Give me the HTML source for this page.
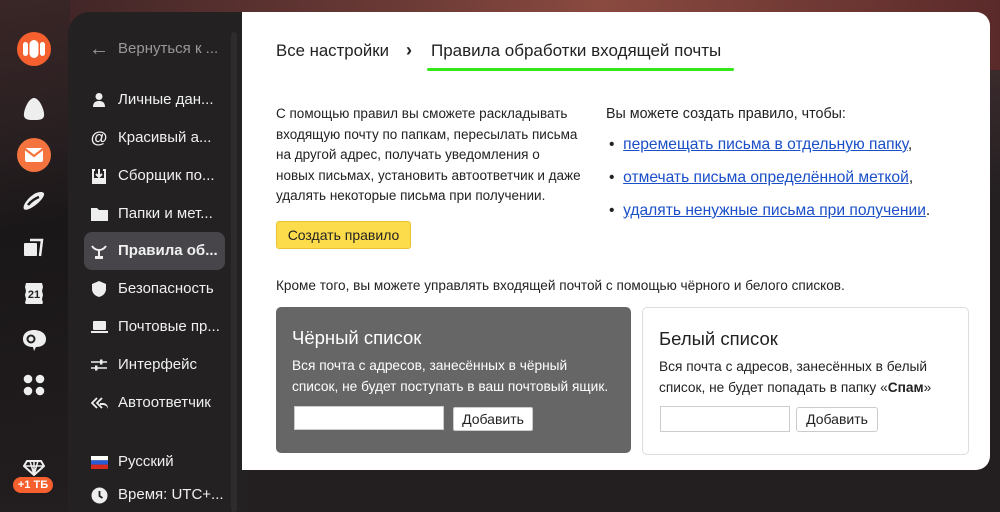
<!DOCTYPE html>
<html><head><meta charset="utf-8"><style>
*{margin:0;padding:0;box-sizing:border-box}
body{width:1000px;height:505px;overflow:hidden;position:relative;font-family:"Liberation Sans",sans-serif;background:#231f21}
.topbg{position:absolute;left:0;top:0;width:1000px;height:505px;background:linear-gradient(90deg,#3a2224 0%,#6b3a36 40%,#8a4a40 60%,#5a2a2a 100%)}
.botbg{position:absolute;left:0;top:70px;width:1000px;height:435px;background:linear-gradient(180deg,#3a2a2c 0%,#231f21 30%,#231f21 100%)}
.lbg{position:absolute;left:0;top:0;width:70px;height:505px;background:linear-gradient(170deg,#3a2626 0%,#2a2022 25%,#1a1718 45%,#221d1f 100%)}
.ic{position:absolute;left:17px;width:34px;height:34px}
.settings{position:absolute;left:68px;top:12px;width:180px;height:500px;background:#232122;border-radius:22px 0 0 0}
.scroll{position:absolute;left:231px;top:32px;width:6px;height:480px;background:#2e2c2d;border-radius:3px}
.item{position:absolute;left:90px;color:#f0f0f0;font-size:15px;height:20px;line-height:20px;display:flex;align-items:center}
.item .i{width:18px;height:18px;margin-right:10px;display:flex;align-items:center;justify-content:center}
.sel{position:absolute;left:84px;top:232px;width:141px;height:38px;background:#47454a;border-radius:8px}
.main{position:absolute;left:242px;top:12px;width:748px;height:458px;background:#fff;border-radius:0 14px 14px 0}
.t{position:absolute;color:#222;font-size:14px;line-height:20.5px}
a{color:#1a4fc8;text-decoration:underline}
</style></head><body>
<div class="topbg"></div>
<div class="botbg"></div>
<div class="lbg"></div>
<svg class="ic" style="top:32px" viewBox="0 0 34 34"><circle cx="17" cy="17" r="17" fill="#f5602e"/><rect x="6" y="10" width="5" height="14" rx="2.5" fill="#fff"/><rect x="12.5" y="8" width="9" height="18" rx="4.5" fill="#fff"/><rect x="23" y="10" width="5" height="14" rx="2.5" fill="#fff"/></svg>
<svg class="ic" style="top:92px" viewBox="0 0 34 34"><path d="M17 6C11 6 6 20 7 24c1 4 5 4 10 4s9 0 10-4C28 20 23 6 17 6z" fill="#eee"/></svg>
<svg class="ic" style="top:138px" viewBox="0 0 34 34"><circle cx="17" cy="17" r="17" fill="#f5733e"/><rect x="8" y="10" width="18" height="14" rx="2" fill="#fff"/><path d="M8 11l9 7 9-7" stroke="#f5733e" stroke-width="2.2" fill="none"/></svg>
<svg class="ic" style="top:183px" viewBox="0 0 34 34"><path d="M7 26c-2-3 4-12 12-16 5-2 9-1 8 2-1 4-8 11-15 14-3 1-4 1-5 0z" fill="#eee"/><path d="M11 22c3-4 8-7 11-8" stroke="#1d1a1b" stroke-width="2.4" fill="none"/></svg>
<svg class="ic" style="top:230px" viewBox="0 0 34 34"><rect x="7" y="13" width="13" height="13" rx="1" fill="#eee"/><path d="M13 10h12l-2 16" stroke="#eee" stroke-width="2.5" fill="none"/></svg>
<svg class="ic" style="top:276px" viewBox="0 0 34 34"><path d="M9 7h16l1 4-1 4 1 4-1 4 1 4-1 1H9l-1-1 1-4-1-4 1-4-1-4 1-4z" fill="#eee"/><text x="17" y="22" font-size="11" font-weight="bold" text-anchor="middle" fill="#222" font-family="Liberation Sans">21</text></svg>
<svg class="ic" style="top:322px" viewBox="0 0 34 34"><path d="M6 17c0-6 5-9 11-9s12 3 12 9-5 8-10 8l-2 4-1-4c-5 0-10-2-10-8z" fill="#eee"/><circle cx="14" cy="17" r="3.5" fill="none" stroke="#222" stroke-width="2"/></svg>
<svg class="ic" style="top:368px" viewBox="0 0 34 34"><circle cx="11" cy="11" r="4.3" fill="#eee"/><circle cx="23" cy="11" r="4.3" fill="#eee"/><circle cx="11" cy="23" r="4.3" fill="#eee"/><circle cx="23" cy="23" r="4.3" fill="#eee"/></svg>
<svg style="position:absolute;left:23px;top:458px" width="22" height="18" viewBox="0 0 22 18"><path d="M4 3h14l3 5-10 9L1 8z" fill="none" stroke="#eee" stroke-width="2"/><path d="M1 8h20M11 3v14M7 3l4 14M15 3l-4 14" stroke="#eee" stroke-width="1.5"/></svg>
<div style="position:absolute;left:13px;top:477px;width:40px;height:16px;background:#f5602e;border-radius:8px;color:#fff;font-size:11px;font-weight:bold;text-align:center;line-height:16px">+1 ТБ</div>

<div class="settings"></div>
<div class="scroll"></div>
<div class="sel"></div>
<div class="item" style="top:39px;color:#9a989a"><span class="i" style="font-size:20px;color:#9a989a">&#8592;</span>Вернуться к ...</div>
<div class="item" style="top:90px"><span class="i"><svg width="14" height="16"><circle cx="7" cy="4.5" r="3.5" fill="#eee"/><path d="M1 15c0-5 3-6 6-6s6 1 6 6z" fill="#eee"/></svg></span>Личные дан...</div>
<div class="item" style="top:128px"><span class="i" style="font-weight:bold;font-size:17px">@</span>Красивый а...</div>
<div class="item" style="top:166px"><span class="i"><svg width="16" height="16"><path d="M4 2H2v13h12V2h-2" fill="none" stroke="#eee" stroke-width="2"/><path d="M8 1v8M5 6l3 3 3-3" stroke="#eee" stroke-width="2" fill="none"/><rect x="3" y="10" width="10" height="4" fill="#eee"/></svg></span>Сборщик по...</div>
<div class="item" style="top:204px"><span class="i"><svg width="17" height="14"><path d="M0 1h6l2 2h9v11H0z" fill="#eee"/></svg></span>Папки и мет...</div>
<div class="item" style="top:241px;font-weight:bold"><span class="i"><svg width="16" height="16"><path d="M1 3c2 3 5 4 7 4s5-1 7-4M8 7v7" stroke="#eee" stroke-width="2" fill="none"/><rect x="4" y="13" width="8" height="3" fill="#eee"/></svg></span>Правила об...</div>
<div class="item" style="top:279px"><span class="i"><svg width="14" height="16"><path d="M7 0l7 3v5c0 4-3 7-7 8-4-1-7-4-7-8V3z" fill="#eee"/></svg></span>Безопасность</div>
<div class="item" style="top:317px"><span class="i"><svg width="17" height="14"><rect x="2" y="1" width="13" height="9" rx="1" fill="#eee"/><rect x="0" y="11" width="17" height="2" fill="#eee"/></svg></span>Почтовые пр...</div>
<div class="item" style="top:355px"><span class="i"><svg width="16" height="14"><path d="M0 4h16M0 10h16" stroke="#eee" stroke-width="1.6"/><rect x="9" y="1.5" width="2.5" height="5" fill="#eee"/><rect x="4" y="7.5" width="2.5" height="5" fill="#eee"/></svg></span>Интерфейс</div>
<div class="item" style="top:393px"><span class="i"><svg width="17" height="14"><path d="M6 2L1 7l5 5M11 2L6 7l5 5" stroke="#eee" stroke-width="1.8" fill="none"/><path d="M9 7h3c3 0 5 2 5 6-1-3-3-4-5-4H9z" fill="#eee"/></svg></span>Автоответчик</div>
<div class="item" style="top:452px"><span class="i"><svg width="17" height="13"><rect width="17" height="4.3" fill="#fff"/><rect y="4.3" width="17" height="4.3" fill="#2a5bd7"/><rect y="8.6" width="17" height="4.4" fill="#d52b1e"/></svg></span>Русский</div>
<div class="item" style="top:485px"><span class="i"><svg width="17" height="17"><circle cx="8.5" cy="8.5" r="8" fill="#eee"/><path d="M8.5 4v5l3 2" stroke="#232122" stroke-width="1.8" fill="none"/></svg></span>Время: UTC+...</div>

<div class="main"></div>
<div style="position:absolute;left:276px;top:41px;font-size:16.8px;color:#222">Все настройки</div>
<div style="position:absolute;left:406px;top:40px;font-size:18px;color:#222;font-weight:bold">›</div>
<div style="position:absolute;left:431px;top:41px;font-size:17px;color:#222">Правила обработки входящей почты</div>
<div style="position:absolute;left:427px;top:68px;width:307px;height:3px;background:#35e61a;border-radius:2px"></div>

<div class="t" style="left:276px;top:104px;width:330px;font-size:13.5px">С помощью правил вы сможете раскладывать<br>входящую почту по папкам, пересылать письма<br>на другой адрес, получать уведомления о<br>новых письмах, установить автоответчик и даже<br>удалять некоторые письма при получении.</div>
<div style="position:absolute;left:276px;top:221px;width:135px;height:28px;background:#fddc4b;border:1px solid #e8c435;border-radius:3px;font-size:14px;color:#222;line-height:26px;text-align:center">Создать правило</div>

<div class="t" style="left:606px;top:104px;font-size:14.3px">Вы можете создать правило, чтобы:</div>
<div class="t" style="left:609px;top:135px;font-size:15.6px">•&nbsp;&nbsp;<a>перемещать письма в отдельную папку</a>,</div>
<div class="t" style="left:609px;top:168px;font-size:15.6px">•&nbsp;&nbsp;<a>отмечать письма определённой меткой</a>,</div>
<div class="t" style="left:609px;top:201px;font-size:15.6px">•&nbsp;&nbsp;<a>удалять ненужные письма при получении</a>.</div>

<div class="t" style="left:276px;top:276px;font-size:13.6px">Кроме того, вы можете управлять входящей почтой с помощью чёрного и белого списков.</div>

<div style="position:absolute;left:276px;top:307px;width:355px;height:146px;background:#666;border-radius:5px"></div>
<div style="position:absolute;left:292px;top:327px;font-size:18.5px;color:#fff">Чёрный список</div>
<div class="t" style="left:292px;top:356px;color:#fff;font-size:13.7px">Вся почта с адресов, занесённых в чёрный<br>список, не будет поступать в ваш почтовый ящик.</div>
<div style="position:absolute;left:294px;top:406px;width:150px;height:24px;background:#fff;border:1px solid #ccc"></div>
<div style="position:absolute;left:453px;top:407px;width:80px;height:24px;background:#fff;border:1px solid #ccc;border-radius:2px;font-size:14px;text-align:center;line-height:22px;color:#222">Добавить</div>

<div style="position:absolute;left:642px;top:307px;width:327px;height:148px;background:#fff;border:1px solid #ddd;border-radius:5px"></div>
<div style="position:absolute;left:659px;top:328px;font-size:18.5px;color:#222">Белый список</div>
<div class="t" style="left:659px;top:357px;font-size:13.7px">Вся почта с адресов, занесённых в белый<br>список, не будет попадать в папку «<b>Спам</b>»</div>
<div style="position:absolute;left:660px;top:406px;width:130px;height:26px;background:#fff;border:1px solid #ccc"></div>
<div style="position:absolute;left:796px;top:407px;width:82px;height:25px;background:#fff;border:1px solid #ccc;border-radius:3px;font-size:14px;text-align:center;line-height:23px;color:#222">Добавить</div>
</body></html>
